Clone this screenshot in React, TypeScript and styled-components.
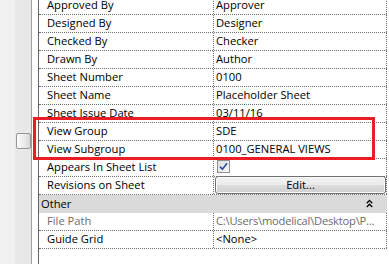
import React from 'react';
import styled, { createGlobalStyle } from 'styled-components';

const GlobalStyle = createGlobalStyle`
  html, body {
    margin: 0;
    padding: 0;
    background: #ffffff;
  }
`;

const Page = styled.div`
  position: relative;
  display: flex;
  width: 389px;
  height: 264px;
  overflow: hidden;
  background: #ffffff;
  font-family: 'Open Sans', 'Liberation Sans', sans-serif;
  font-size: 11.2px;
  color: #000;
`;

const Gutter = styled.div`
  width: 15px;
  flex: none;
  background: #f0f0f0;
`;

const ScrollTrack = styled.div`
  width: 16px;
  flex: none;
  background: #e8e8e8;
  border-right: 1px solid #a0a0a0;
  padding-top: 133px;
  box-sizing: content-box;
`;

const Thumb = styled.div`
  width: 15px;
  height: 16px;
  margin-left: 1px;
  box-sizing: border-box;
  border: 1px solid #979797;
  border-radius: 2px;
  background: linear-gradient(to right, #fbfbfb, #e9e9e9 60%, #d6d6d6);
`;

const Spacer = styled.div`
  width: 6px;
  flex: none;
`;

const Grid = styled.div`
  width: 348px;
  flex: none;
  border-left: 1px solid #646464;
  margin-top: -3px;
`;

const Row = styled.div`
  display: grid;
  grid-template-columns: 175px 173px;
  height: 18px;
  box-sizing: border-box;
  border-bottom: 1px dotted #6e6e6e;
`;

const Label = styled.div<{ $muted?: boolean }>`
  padding: 0 0 2px 8px;
  line-height: 15px;
  border-right: 1px dotted #6e6e6e;
  color: ${(p) => (p.$muted ? '#6d6d6d' : '#000')};
  white-space: nowrap;
  overflow: hidden;
`;

const Value = styled.div<{ $muted?: boolean }>`
  padding: 0 0 2px 2px;
  line-height: 15px;
  border-right: 1px dotted #6e6e6e;
  color: ${(p) => (p.$muted ? '#6d6d6d' : '#000')};
  letter-spacing: ${(p) => (p.$muted ? '-0.22px' : 'normal')};
  white-space: nowrap;
  overflow: hidden;
`;

const CategoryRow = styled.div`
  display: flex;
  align-items: center;
  justify-content: space-between;
  height: 18px;
  padding: 0 14px 2px 2px;
  box-sizing: border-box;
  line-height: 15px;
  background: #dadada;
`;

const CheckCell = styled.div`
  display: flex;
  align-items: flex-start;
  padding: 1px 0 0 3px;
  border-right: 1px dotted #6e6e6e;
`;

const CheckBox = styled.div`
  width: 13px;
  height: 13px;
  box-sizing: border-box;
  border: 1px solid #8e8f8f;
  background: linear-gradient(135deg, #dedede, #f7f7f7);
  display: flex;
  align-items: center;
  justify-content: center;
`;

const ButtonCell = styled.div`
  display: flex;
  border-right: 1px dotted #6e6e6e;
  margin-top: -1px;
  padding-left: 1px;
`;

const EditButton = styled.div`
  flex: 1;
  height: 18px;
  box-sizing: border-box;
  border: 1px solid #707070;
  border-radius: 3px;
  box-shadow: inset 0 0 0 1px #fbfbfb;
  background: linear-gradient(to bottom, #f2f2f2 0%, #ebebeb 50%, #dddddd 51%, #cfcfcf 100%);
  text-align: center;
  line-height: 15px;
`;

const Highlight = styled.div`
  position: absolute;
  left: 33px;
  top: 117px;
  width: 342px;
  height: 43px;
  box-sizing: border-box;
  border: 3px solid #ed1c24;
  pointer-events: none;
`;

const rows: [string, string][] = [
  ['Approved By', 'Approver'],
  ['Designed By', 'Designer'],
  ['Checked By', 'Checker'],
  ['Drawn By', 'Author'],
  ['Sheet Number', '0100'],
  ['Sheet Name', 'Placeholder Sheet'],
  ['Sheet Issue Date', '03/11/16'],
  ['View Group', 'SDE'],
  ['View Subgroup', '0100_GENERAL VIEWS'],
];

const Check = () => (
  <svg width="9" height="9" viewBox="0 0 9 9">
    <path d="M1 4.6 L3.4 7.2 L8 1.2" fill="none" stroke="#2c4fa3" strokeWidth="1.6" />
  </svg>
);

const Collapse = () => (
  <svg width="7" height="9" viewBox="0 0 7 9">
    <path d="M0.8 4.2 L3.5 1.4 L6.2 4.2 M0.8 8 L3.5 5.2 L6.2 8" fill="none" stroke="#000" strokeWidth="1.3" />
  </svg>
);

export default function App() {
  return (
    <Page>
      <GlobalStyle />
      <Gutter />
      <ScrollTrack>
        <Thumb />
      </ScrollTrack>
      <Spacer />
      <Grid>
        {rows.map(([label, value]) => (
          <Row key={label}>
            <Label>{label}</Label>
            <Value>{value}</Value>
          </Row>
        ))}
        <Row>
          <Label>Appears In Sheet List</Label>
          <CheckCell>
            <CheckBox>
              <Check />
            </CheckBox>
          </CheckCell>
        </Row>
        <Row>
          <Label>Revisions on Sheet</Label>
          <ButtonCell>
            <EditButton>Edit...</EditButton>
          </ButtonCell>
        </Row>
        <CategoryRow>
          <span>Other</span>
          <Collapse />
        </CategoryRow>
        <Row>
          <Label $muted>File Path</Label>
          <Value $muted>C:\Users\modelical\Desktop\P...</Value>
        </Row>
        <Row>
          <Label>Guide Grid</Label>
          <Value>&lt;None&gt;</Value>
        </Row>
      </Grid>
      <Highlight />
    </Page>
  );
}
